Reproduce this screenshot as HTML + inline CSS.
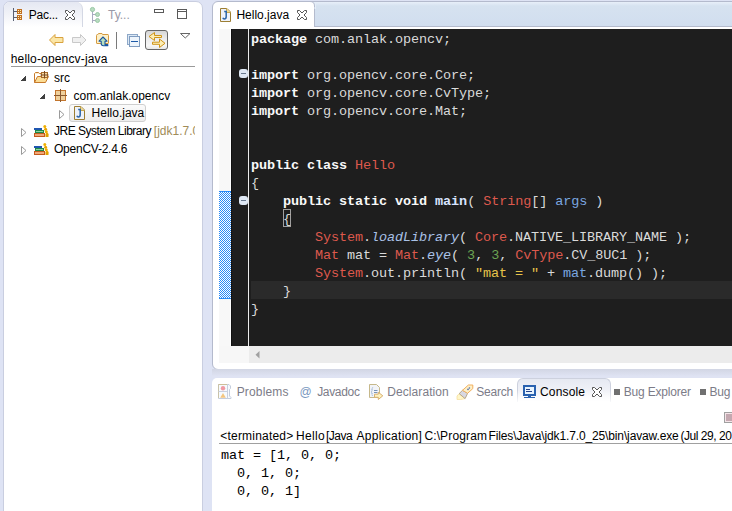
<!DOCTYPE html>
<html><head><meta charset="utf-8">
<style>
*{margin:0;padding:0;box-sizing:border-box}
html,body{width:732px;height:511px;overflow:hidden}
body{background:#dee3f4;position:relative;font-family:"Liberation Sans",sans-serif;font-size:12px;color:#000}
.a{position:absolute}
svg{position:absolute;overflow:visible}
.t{position:absolute;white-space:pre;line-height:14px}
.g{color:#7c7c88}
/* code */
.code{position:absolute;left:249px;top:29px;width:483px;height:317px;background:#1e1e1e;overflow:hidden}
.ln{position:absolute;left:2px;margin-top:2px;height:18px;white-space:pre;font-family:"Liberation Mono",monospace;font-size:13.5px;letter-spacing:-0.1px;line-height:18px;color:#dadada}
.k{color:#f8f8f8;font-weight:bold}
.c{color:#dd594d}
.m{color:#d8e4ff;font-weight:bold}
.v{color:#7ba7e0}
.i{color:#a9c1e6;font-style:italic}
.n{color:#6ba453}
.s{color:#e8c44a}
.cons{position:absolute;white-space:pre;font-family:"Liberation Mono",monospace;font-size:13.5px;letter-spacing:-0.1px;line-height:18px;color:#000}
</style></head><body>

<!-- LEFT PANEL -->
<div class="a" id="lp" style="left:3px;top:1px;width:200px;height:520px;border-radius:7px 7px 0 0;background:#fff;border:1px solid #c9cee0;overflow:hidden">
<div class="a" style="left:-4px;top:-2px;width:732px;height:511px">
 <!-- Pac tab -->
 <div class="a" style="left:4px;top:2px;width:79px;height:25px;border-radius:0 7px 0 0;border-right:1px solid #d4d8e4;background:linear-gradient(#e5e8f2,#f4f5f9 60%,#ffffff)"></div>
 <svg style="left:13px;top:8px" width="10" height="13" shape-rendering="crispEdges">
  <rect x="0" y="0" width="1" height="13" fill="#5a6070"/>
  <rect x="1" y="3" width="3" height="1" fill="#5a6070"/>
  <rect x="1" y="9" width="3" height="1" fill="#5a6070"/>
  <rect x="4" y="1" width="5" height="5" fill="#c06f22"/>
  <rect x="4" y="7" width="5" height="5" fill="#c06f22"/>
  <rect x="5" y="2" width="1" height="1" fill="#fff2b0"/><rect x="7" y="2" width="1" height="1" fill="#fff2b0"/>
  <rect x="5" y="4" width="1" height="1" fill="#fff2b0"/><rect x="7" y="4" width="1" height="1" fill="#fff2b0"/>
  <rect x="5" y="8" width="1" height="1" fill="#fff2b0"/><rect x="7" y="8" width="1" height="1" fill="#fff2b0"/>
  <rect x="5" y="10" width="1" height="1" fill="#fff2b0"/><rect x="7" y="10" width="1" height="1" fill="#fff2b0"/>
 </svg>
 <div class="t" style="left:28.7px;top:8px;letter-spacing:-0.24px">Pac...</div>
 <svg style="left:65px;top:10px" width="10" height="10"><path d="M0.5 0.5H2.5L5 3L7.5 0.5H9.5V2.5L7 5L9.5 7.5V9.5H7.5L5 7L2.5 9.5H0.5V7.5L3 5L0.5 2.5Z" fill="#fff" stroke="#555" stroke-width="1"/></svg>
 <!-- type hierarchy -->
 <svg style="left:89px;top:7px" width="12" height="16">
  <rect x="3" y="4" width="1" height="12" fill="#a9abc0"/>
  <rect x="4" y="7" width="3" height="1" fill="#a9abc0"/>
  <rect x="4" y="13" width="3" height="1" fill="#a9abc0"/>
  <circle cx="3.5" cy="2.5" r="2.1" fill="#b8dcc0" stroke="#94c4a0" stroke-width="0.9"/>
  <circle cx="8.5" cy="7.5" r="2" fill="#b8dcc0" stroke="#94c4a0" stroke-width="0.9"/>
  <circle cx="8.5" cy="13.5" r="2" fill="#b8dcc0" stroke="#94c4a0" stroke-width="0.9"/>
 </svg>
 <div class="t" style="left:108px;top:8px;color:#9a9aa8">Ty...</div>
 <!-- min max -->
 <svg style="left:154px;top:9px" width="11" height="11" shape-rendering="crispEdges">
  <rect x="0.5" y="0.5" width="9" height="3" fill="none" stroke="#5a5a5a"/>
 </svg>
 <svg style="left:177px;top:9px" width="11" height="11" shape-rendering="crispEdges">
  <rect x="0.5" y="0.5" width="9" height="9" fill="none" stroke="#5a5a5a"/>
  <rect x="0" y="2" width="10" height="1" fill="#5a5a5a"/>
 </svg>
 <!-- toolbar -->
 <svg style="left:49px;top:34px" width="15" height="12">
  <path d="M0.5 6L6 0.5V3.5H14V8.5H6V11.5Z" fill="#fbe6a6" stroke="#d9a23e" stroke-width="1" stroke-linejoin="round"/>
 </svg>
 <svg style="left:72px;top:34px" width="15" height="12">
  <path d="M14 6L8.5 0.5V3.5H0.5V8.5H8.5V11.5Z" fill="#f0f0f0" stroke="#c9c9c9" stroke-width="1" stroke-linejoin="round"/>
 </svg>
 <svg style="left:96px;top:33px" width="14" height="14">
  <path d="M0.5 2.5Q0.5 1.5 1.5 1.5H2L2.5 0.5H6L6.5 1.5H12Q12.5 1.5 12.5 2.5V10Q12.5 10.5 12 10.5H1Q0.5 10.5 0.5 10Z" fill="#fdf0c8" stroke="#d49a40"/>
  <path d="M7 4L3 8.2H5.2V10.5Q5.2 12.6 7.5 12.8H11.8V11.6H9V8.2H11Z" fill="#b8e0c0" stroke="#1a56a0" stroke-width="1.1" stroke-linejoin="round"/>
 </svg>
 <div class="a" style="left:116px;top:32px;width:1px;height:17px;background:#7a7a7a"></div>
 <svg style="left:127px;top:34px" width="14" height="14" shape-rendering="crispEdges">
  <rect x="0.5" y="0.5" width="10" height="10" fill="#dbe8f5" stroke="#8ea8c8"/>
  <rect x="2.5" y="2.5" width="10" height="10" fill="#eef5fc" stroke="#7f9cc0"/>
  <rect x="4" y="7" width="7" height="1" fill="#1e5aa8"/>
 </svg>
 <div class="a" style="left:145px;top:30px;width:23px;height:20px;border:1px solid #666;border-radius:3px;background:linear-gradient(#d6d6d6,#ededed 45%,#f6f6f6 80%,#e8e8e8)"></div>
 <svg style="left:148px;top:32px" width="18" height="17">
  <path d="M1 4.5L6.5 0.5V3.5H13.5V5.5H6.5V8.5Z" fill="#fdeeb4" stroke="#cf9418" stroke-linejoin="round"/>
  <path d="M17 11.3L11.5 7V10.2H4.5V12.3H11.5V15.5Z" fill="#fdeeb4" stroke="#cf9418" stroke-linejoin="round"/>
 </svg>
 <svg style="left:180px;top:33px" width="11" height="6">
  <path d="M0.5 0.5H10L5.25 5Z" fill="#fff" stroke="#666"/>
 </svg>

 <div class="t" style="left:10.7px;top:52px;letter-spacing:0.17px">hello-opencv-java</div>
 <div class="a" style="left:11px;top:66px;width:184px;height:1px;background:#9a9a9a"></div>

 <!-- tree -->
 <svg style="left:20px;top:75px" width="7" height="7" shape-rendering="crispEdges"><path d="M6 0V6H0Z" fill="#404040"/></svg>
 <svg style="left:34px;top:71px" width="16" height="13">
  <path d="M0.5 2.5V11.5H11.5L14.5 5.5H3.5L0.5 11.5M0.5 2.5L1.5 1.5H4.5L5.5 2.5H7" fill="#fbdc94" stroke="#c77a2c" stroke-linejoin="round"/>
  <rect x="7.5" y="1.5" width="6" height="5" fill="#f6d9a6" stroke="#a86a2a"/>
  <path d="M10.5 0V7.5M6.5 4H14.5" stroke="#7a4a20"/>
 </svg>
 <div class="t" style="left:54px;top:71px;">src</div>
 <svg style="left:39px;top:93px" width="7" height="7" shape-rendering="crispEdges"><path d="M6 0V6H0Z" fill="#404040"/></svg>
 <svg style="left:54px;top:89px" width="13" height="13" shape-rendering="crispEdges">
  <rect x="1.5" y="1.5" width="10" height="10" fill="#efd09c" stroke="#c3762e"/>
  <rect x="6" y="0" width="1" height="13" fill="#8a5a30"/>
  <rect x="0" y="6" width="13" height="1" fill="#8a5a30"/>
 </svg>
 <div class="t" style="left:73.5px;top:89px;">com.anlak.opencv</div>
 <svg style="left:59px;top:110px" width="6" height="9"><path d="M0.5 0.5V8.5L5 4.5Z" fill="none" stroke="#9a9a9a"/></svg>
 <div class="a" style="left:69px;top:104px;width:77px;height:18px;border:1px solid #cfcfcf;border-radius:3px;background:linear-gradient(#fbfbfb,#ededed)"></div>
 <svg style="left:74px;top:106px" width="11" height="14">
  <path d="M0.5 0.5H7L10.5 4V13.5H0.5Z" fill="#eef2fa" stroke="#9c7e34"/>
  <path d="M6.5 0.5V4.5H10.5" fill="#f0d890" stroke="#c8a850"/>
  <path d="M4.2 3.6H7M6.2 3.5V8.8Q6.2 10.9 4.3 10.9Q3.2 10.9 2.9 9.8" fill="none" stroke="#2a64a8" stroke-width="1.5"/>
 </svg>
 <div class="t" style="left:91.6px;top:106px;">Hello.java</div>
 <svg style="left:21px;top:128px" width="6" height="9"><path d="M0.5 0.5V8.5L5 4.5Z" fill="none" stroke="#9a9a9a"/></svg>
 <svg id="lib" style="left:34px;top:125px" width="15" height="12">
  <rect x="0" y="3" width="8" height="2" fill="#1f56b0"/>
  <rect x="1" y="5" width="9" height="3" fill="#1e8a4a"/>
  <rect x="2" y="6" width="7" height="1" fill="#8fd0a0"/>
  <rect x="0" y="8" width="11" height="4" fill="#c35a1c"/>
  <rect x="1" y="9" width="9" height="2" fill="#f0a878"/>
  <circle cx="10.8" cy="1.6" r="1.5" fill="#f0b000"/><circle cx="11.6" cy="4.2" r="1.5" fill="#e8a400"/><circle cx="12.3" cy="6.8" r="1.5" fill="#f0b000"/><circle cx="13" cy="9.3" r="1.5" fill="#e8a400"/><rect x="11.5" y="10" width="3" height="2" fill="#e0a000"/>
 </svg>
 <div class="a" style="left:54px;top:120px;width:141px;height:20px;overflow:hidden"><div class="t" style="left:0;top:4px;letter-spacing:-0.5px">JRE System Library <span style="color:#a08c58;letter-spacing:0">[jdk1.7.0_25]</span></div></div>
 <svg style="left:21px;top:146px" width="6" height="9"><path d="M0.5 0.5V8.5L5 4.5Z" fill="none" stroke="#9a9a9a"/></svg>
 <svg style="left:34px;top:143px" width="15" height="12">
  <rect x="0" y="3" width="8" height="2" fill="#1f56b0"/>
  <rect x="1" y="5" width="9" height="3" fill="#1e8a4a"/>
  <rect x="2" y="6" width="7" height="1" fill="#8fd0a0"/>
  <rect x="0" y="8" width="11" height="4" fill="#c35a1c"/>
  <rect x="1" y="9" width="9" height="2" fill="#f0a878"/>
  <circle cx="10.8" cy="1.6" r="1.5" fill="#f0b000"/><circle cx="11.6" cy="4.2" r="1.5" fill="#e8a400"/><circle cx="12.3" cy="6.8" r="1.5" fill="#f0b000"/><circle cx="13" cy="9.3" r="1.5" fill="#e8a400"/><rect x="11.5" y="10" width="3" height="2" fill="#e0a000"/>
 </svg>
 <div class="t" style="left:54px;top:142px;letter-spacing:-0.24px">OpenCV-2.4.6</div>
</div>
</div>

<!-- EDITOR PANEL -->
<div class="a" id="ep" style="left:212px;top:1px;width:530px;height:369px;border-radius:6px 0 0 6px;background:#fff;border:1px solid #b4bacd;overflow:hidden">
<div class="a" style="left:-213px;top:-2px;width:732px;height:511px">
 <!-- tab bar -->
 <div class="a" style="left:315px;top:2px;width:430px;height:25px;background:linear-gradient(#e8eff9 0,#d6e2f0 4px,#d1deef 100%);border-bottom:1px solid #b4bbcd"></div><div class="a" style="left:314px;top:6px;width:1px;height:21px;background:#b4bbcd"></div>
 <svg style="left:309px;top:1px" width="7" height="8"><path d="M1 0.5Q5.5 0.5 5.5 5V8H7V0H1Z" fill="#e4edf8"/><path d="M1 0.5Q5.5 0.5 5.5 5V6" fill="none" stroke="#b4bbcd"/></svg>
 <svg style="left:220px;top:8px" width="11" height="14">
  <path d="M0.5 0.5H7L10.5 4V13.5H0.5Z" fill="#eef2fa" stroke="#9c7e34"/>
  <path d="M6.5 0.5V4.5H10.5" fill="#f0d890" stroke="#c8a850"/>
  <path d="M4.2 3.6H7M6.2 3.5V8.8Q6.2 10.9 4.3 10.9Q3.2 10.9 2.9 9.8" fill="none" stroke="#2a64a8" stroke-width="1.5"/>
 </svg>
 <div class="t" style="left:236.4px;top:8px;">Hello.java</div>
 <svg style="left:297px;top:10px" width="10" height="10"><path d="M0.5 0.5H2.5L5 3L7.5 0.5H9.5V2.5L7 5L9.5 7.5V9.5H7.5L5 7L2.5 9.5H0.5V7.5L3 5L0.5 2.5Z" fill="#fff" stroke="#555" stroke-width="1"/></svg>

 <!-- rulers -->
 <div class="a" style="left:219px;top:29px;width:11px;height:317px;background:#f8f8f8"></div>
 <svg style="left:219px;top:191px" width="12" height="108" shape-rendering="crispEdges">
  <defs><pattern id="chk" width="2" height="2" patternUnits="userSpaceOnUse"><rect width="2" height="2" fill="#fff"/><rect width="1" height="1" fill="#2a8af6"/><rect x="1" y="1" width="1" height="1" fill="#2a8af6"/></pattern></defs>
  <rect width="12" height="108" fill="url(#chk)"/>
  <rect width="12" height="1" fill="#2a8af6"/>
  <rect y="107" width="12" height="1" fill="#2a8af6"/>
 </svg>
 <div class="a" style="left:231px;top:29px;width:17px;height:317px;background:#1e1e1e"></div>
 <div class="a" style="left:231px;top:29px;width:1px;height:317px;background:#121212"></div>
 <div class="a" style="left:248px;top:29px;width:1px;height:317px;background:#ececec"></div>
 <!-- fold markers -->
 <div class="a" style="left:239px;top:69px;width:9px;height:9px;border-radius:3px;background:#dfe8f4"><div class="a" style="left:2px;top:4px;width:5px;height:1px;background:#6a7a90"></div></div>
 <div class="a" style="left:239px;top:196px;width:9px;height:9px;border-radius:3px;background:#dfe8f4"><div class="a" style="left:2px;top:4px;width:5px;height:1px;background:#6a7a90"></div></div>

 <div class="code">
  <div class="a" style="left:2px;top:252px;width:500px;height:18px;background:#2a2a2a"></div>
  <div class="a" style="left:34px;top:180px;width:8px;height:18px;border:1px solid #a0a0a0"></div>
  <div class="ln" style="top:0"><span class="k">package</span> com.anlak.opencv;</div>
  <div class="ln" style="top:36px"><span class="k">import</span> org.opencv.core.Core;</div>
  <div class="ln" style="top:54px"><span class="k">import</span> org.opencv.core.CvType;</div>
  <div class="ln" style="top:72px"><span class="k">import</span> org.opencv.core.Mat;</div>
  <div class="ln" style="top:126px"><span class="k">public</span> <span class="k">class</span> <span class="c">Hello</span></div>
  <div class="ln" style="top:144px">{</div>
  <div class="ln" style="top:162px">    <span class="k">public</span> <span class="k">static</span> <span class="k">void</span> <span class="m">main</span>( <span class="c">String</span>[] <span class="v">args</span> )</div>
  <div class="ln" style="top:180px">    {</div>
  <div class="ln" style="top:198px">        <span class="c">System</span>.<span class="i">loadLibrary</span>( <span class="c">Core</span>.NATIVE_LIBRARY_NAME );</div>
  <div class="ln" style="top:216px">        <span class="c">Mat</span> mat = <span class="c">Mat</span>.<span class="i">eye</span>( <span class="n">3</span>, <span class="n">3</span>, <span class="c">CvType</span>.CV_8UC1 );</div>
  <div class="ln" style="top:234px">        <span class="c">System</span>.out.println( <span class="s">"mat = "</span> + <span class="v">mat</span>.dump() );</div>
  <div class="ln" style="top:252px">    }</div>
  <div class="ln" style="top:270px">}</div>
 </div>
 <!-- h scrollbar -->
 <div class="a" style="left:219px;top:346px;width:30px;height:17px;background:#f7f7f7"></div>
 <div class="a" style="left:249px;top:346px;width:483px;height:17px;background:#ececec"></div>
 <svg style="left:255px;top:351px" width="5" height="8"><path d="M4.5 0V7.5L0.5 3.75Z" fill="#a0a0a0"/></svg>
</div>
</div>

<!-- CONSOLE PANEL -->
<div class="a" style="left:212px;top:369px;width:520px;height:9px;background:linear-gradient(#d2d6e4,#dfe3f3 80%)"></div>
<div class="a" id="cp" style="left:212px;top:378px;width:530px;height:150px;border-radius:5px 0 0 0;background:#fff;overflow:hidden">
<div class="a" style="left:-212px;top:-378px;width:732px;height:511px">
 <!-- console tab -->
 <div class="a" style="left:517px;top:378px;width:94px;height:24px;border-radius:6px 6px 0 0;border:1px solid #cdd1de;border-bottom:none;background:linear-gradient(#e6e9f2,#f4f5f9 70%,#fff)"></div><div class="a" style="left:516px;top:390px;width:96px;height:14px;background:linear-gradient(rgba(255,255,255,0),#fff)"></div>
 <svg style="left:218px;top:384px" width="15" height="15">
  <path d="M0.5 14.5V0.5H11L12.5 2V4.5L11.5 5.5V12L13 13.5V14.5Z" fill="#f6fafe" stroke="#c4cddd"/>
  <path d="M0.5 0.5H9" stroke="#cdbf98"/><path d="M0.5 0.5V14" stroke="#c9c2a8"/>
  <path d="M0.5 7.5H9.5M9.5 0.5V14.5" stroke="#c8d0e0"/>
  <circle cx="5" cy="4.3" r="2.2" fill="#f09aa4"/>
  <path d="M5 9L7.8 13.8H2.2Z" fill="#f4c680"/>
 </svg>
 <div class="t g" style="left:236.7px;top:385px;letter-spacing:0.16px">Problems</div>
 <div class="t" style="left:299.5px;top:385px;color:#7898c0">@</div>
 <div class="t g" style="left:317.2px;top:385px;letter-spacing:-0.33px">Javadoc</div>
 <svg style="left:369px;top:384px" width="15" height="16">
  <path d="M0.5 0.5H7.5L10.5 3.5V13.5H0.5Z" fill="#f2f4f8" stroke="#c6b88a"/>
  <path d="M4 3.5Q3 4 3 5.5V6.5Q3 7.5 2 8Q3 8.5 3 9.5V10.5Q3 11.5 4 12" fill="none" stroke="#7a9cc8" stroke-dasharray="1 0.6"/>
  <path d="M5 6.5H8.5M5 8.5H8.5" stroke="#7a94b8"/>
  <path d="M5.5 10.2H9.3V8.3L13.8 11.8L9.3 15.5V13.3H5.5Z" fill="#fdf2c0" stroke="#d8b070" stroke-linejoin="round"/>
 </svg>
 <div class="t g" style="left:387.2px;top:385px;letter-spacing:0.09px">Declaration</div>
 <svg style="left:456px;top:383px" width="18" height="18">
  <path d="M3 10.8L1 13V16.5H4.5L9 15.6Z" fill="#fff6c8" stroke="#f6e0a0" stroke-width="0.8"/>
  <path d="M3.2 10.6L6.5 7.3L11.6 10.3L9.1 15.6Z" fill="#d8d8e2" stroke="#b8a888"/>
  <path d="M6.5 7.3L12.4 2H16.8V5.6L11.6 10.3Z" fill="#fdf0c8" stroke="#f2b060"/>
  <circle cx="12" cy="6.4" r="0.8" fill="#4a6ab0"/><circle cx="13.4" cy="5" r="0.8" fill="#4a6ab0"/>
 </svg>
 <div class="t g" style="left:476.3px;top:385px;letter-spacing:-0.22px">Search</div>
 <svg style="left:523px;top:385px" width="13" height="13" shape-rendering="crispEdges">
  <rect x="1" y="1" width="11" height="9" fill="#e8f4fe" stroke="#2a62b0" stroke-width="2"/>
  <rect x="3" y="4" width="4" height="1" fill="#24428a"/>
  <rect x="3" y="6" width="6" height="1" fill="#24428a"/>
  <rect x="5" y="10" width="3" height="2" fill="#2a62b0"/>
  <rect x="1" y="12" width="11" height="1" fill="#2a62b0"/>
 </svg>
 <div class="t" style="left:540px;top:385px;letter-spacing:0.17px">Console</div>
 <svg style="left:592px;top:387px" width="10" height="10"><path d="M0.5 0.5H2.5L5 3L7.5 0.5H9.5V2.5L7 5L9.5 7.5V9.5H7.5L5 7L2.5 9.5H0.5V7.5L3 5L0.5 2.5Z" fill="#fff" stroke="#555" stroke-width="1"/></svg>
 <div class="a" style="left:614px;top:389px;width:6px;height:6px;background:#707070"></div>
 <div class="t g" style="left:623.8px;top:385px;letter-spacing:-0.2px">Bug Explorer</div>
 <div class="a" style="left:700px;top:389px;width:6px;height:6px;background:#707070"></div>
 <div class="t g" style="left:709.5px;top:385px;letter-spacing:-0.2px">Bug</div>
 <!-- toolbar icon -->
 <div class="a" style="left:724px;top:412px;width:12px;height:11px;border:1px solid #a0a0a0;background:#f4e4e8"><div class="a" style="left:1px;top:1px;width:10px;height:7px;background:#c4a8b0"></div></div>

 <div class="t" style="left:220.3px;top:429px;letter-spacing:0.2px">&lt;terminated&gt;</div><div class="t" style="left:296px;top:429px;letter-spacing:0.325px">Hello</div><div class="t" style="left:326px;top:429px;letter-spacing:-0.5px">[Java</div><div class="t" style="left:356.5px;top:429px;letter-spacing:0.309px">Application]</div><div class="t" style="left:424.4px;top:429px;letter-spacing:0.133px">C:\Program</div><div class="t" style="left:488.5px;top:429px;letter-spacing:-0.129px">Files\Java\jdk1.7.0_25\bin\javaw.exe</div><div class="t" style="left:680.4px;top:429px;letter-spacing:-0.44px">(Jul 29, 2013)</div>
 <div class="a" style="left:219px;top:443px;width:513px;height:1px;background:#a0a0a0"></div>
 <div class="cons" style="left:221px;top:447px;">mat = [1, 0, 0;
  0, 1, 0;
  0, 0, 1]</div>
</div>
</div>

</body></html>
